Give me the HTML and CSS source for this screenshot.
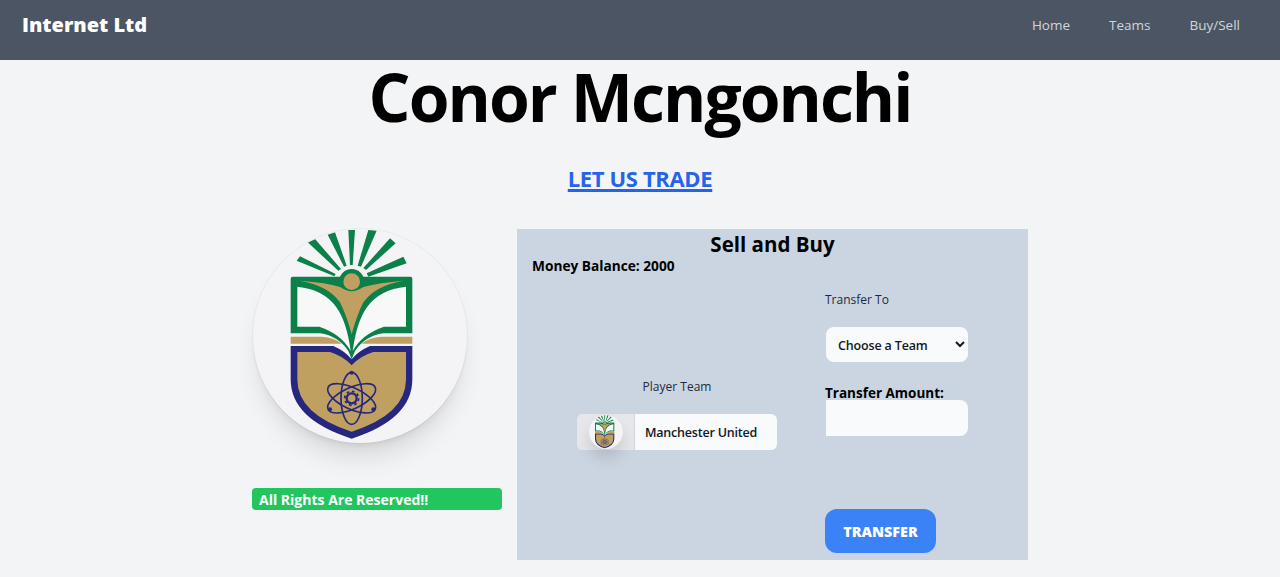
FILE: index.html
```html
<!DOCTYPE html>
<html lang="en">
<head>
    <meta charset="UTF-8">
    <meta name="viewport" content="width=device-width, initial-scale=1.0">
    <title>Internet Ltd</title>
    <link rel="stylesheet" href="styles.css">
</head>
<body>
    <svg class="sprite" aria-hidden="true">
        <symbol id="crest" viewBox="39 29 642 642">
            <circle cx="360" cy="350" r="321" fill="#f4f4f6"/>
            <g fill="#0b8049">
                <polygon points="170,124 180,111 287,164 283,171"/>
                <polygon points="203,69 225,59 303,149 295,154"/>
                <polygon points="263,46 285,39 320,139 312,142"/>
                <polygon points="325,32 345,32 338,137 330,137"/>
                <polygon points="385,32 410,34 363,142 353,139"/>
                <polygon points="450,57 467,72 378,152 370,146"/>
                <polygon points="490,112 500,132 385,172 380,162"/>
                <path d="M152 178 Q152 172 158 172 H512 Q517 172 517 178 V342 H430 Q375 350 345 395 L335 420 L325 395 Q295 350 240 342 H152 Z"/>
                <circle cx="335" cy="187" r="38"/>
            </g>
            <path d="M172 202 Q250 210 288 262 Q320 305 332 395 Q305 345 238 322 H172 Z" fill="#f8f8f8"/>
            <path d="M498 202 Q420 210 382 262 Q350 305 338 395 Q365 345 432 322 H498 Z" fill="#f8f8f8"/>
            <circle cx="335" cy="187" r="25" fill="#c0a060"/>
            <path d="M180 184 Q260 190 300 203 Q335 228 370 203 Q420 190 490 184 Q405 199 370 249 Q350 289 335 345 Q320 289 300 249 Q265 199 180 184 Z" fill="#c0a060"/>
            <path d="M152 352 H245 Q285 355 305 373 H152 Z M517 352 H425 Q385 355 365 373 H517 Z" fill="#c0a060"/>
            <path d="M152 380 H280 Q315 395 335 420 Q355 395 390 380 H517 V480 Q517 600 335 658 Q152 600 152 480 Z" fill="#27277f"/>
            <path d="M172 398 H270 Q310 410 335 438 Q360 410 400 398 H498 V480 Q498 585 335 637 Q172 585 172 480 Z" fill="#c0a060"/>
            <g fill="none" stroke="#27277f" stroke-width="5">
                <ellipse cx="335" cy="537" rx="32" ry="78"/>
                <ellipse cx="335" cy="537" rx="32" ry="78" transform="rotate(65 335 537)"/>
                <ellipse cx="335" cy="537" rx="32" ry="78" transform="rotate(-65 335 537)"/>
                <circle cx="335" cy="537" r="15" stroke-width="7"/>
                <circle cx="335" cy="537" r="21" stroke-width="5" stroke-dasharray="8 8.5"/>
            </g>
            <g fill="#27277f">
                <circle cx="335" cy="460" r="6"/>
                <circle cx="270" cy="570" r="6"/>
                <circle cx="400" cy="570" r="6"/>
            </g>
        </symbol>
    </svg>

    <header class="topbar">
        <a href="#" class="brand">Internet Ltd</a>
        <nav class="nav">
            <a href="#">Home</a>
            <a href="#">Teams</a>
            <a href="#">Buy/Sell</a>
        </nav>
    </header>

    <h1 class="player-name">Conor Mcngonchi</h1>
    <div class="trade-row"><a href="#" class="trade-link">LET US TRADE</a></div>

    <main class="trade">
        <div class="profile">
            <svg class="avatar"><use href="#crest"/></svg>
            <div class="rights">All Rights Are Reserved!!</div>
        </div>

        <form class="panel">
            <h2>Sell and Buy</h2>
            <p class="balance">Money Balance: 2000</p>
            <div class="panel-cols">
                <div class="team-col">
                    <label class="small-label">Player Team</label>
                    <div class="team-box">
                        <span class="team-logo"><svg class="mini-avatar"><use href="#crest"/></svg></span>
                        <span class="team-name">Manchester United</span>
                    </div>
                </div>
                <div class="transfer-col">
                    <label class="small-label" for="team">Transfer To</label>
                    <select id="team" class="field team-select">
                        <option>Choose a Team</option>
                    </select>
                    <label class="amount-label" for="amount">Transfer Amount:</label>
                    <input id="amount" class="field amount-input" type="text">
                    <button type="button" class="transfer-btn">TRANSFER</button>
                </div>
            </div>
        </form>
    </main>
</body>
</html>
```

FILE: styles.css
```css
* {
    box-sizing: border-box;
}

body {
    margin: 0;
    font-family: "Open Sans", "Noto Sans", sans-serif;
    background-color: #f3f4f6;
    color: #000;
}

.sprite {
    display: none;
}

.topbar {
    height: 60px;
    background-color: #4b5563;
    display: flex;
    justify-content: space-between;
    align-items: center;
    padding: 0 20px 10px 22px;
}

.brand {
    color: #fff;
    font-size: 20px;
    font-weight: 800;
    line-height: 28px;
    text-decoration: none;
}

.nav {
    display: flex;
    gap: 39px;
    padding: 0 20px 0 0;
}

.nav a {
    color: #d1d5db;
    font-size: 13.5px;
    text-decoration: none;
}

.player-name {
    margin: 0;
    height: 76px;
    line-height: 73px;
    font-size: 66px;
    font-weight: 700;
    letter-spacing: -2px;
    text-align: center;
}

.trade-row {
    text-align: center;
    padding-top: 27px;
    height: 93px;
}

.trade-link {
    color: #2563eb;
    font-size: 22px;
    font-weight: 700;
    letter-spacing: -0.35px;
    line-height: 30px;
    text-decoration: underline;
    text-decoration-thickness: 3px;
}

.trade {
    display: flex;
    justify-content: center;
    gap: 15px;
}

.profile {
    width: 250px;
}

.avatar {
    display: block;
    width: 214px;
    height: 214px;
    margin-left: 1px;
    border-radius: 50%;
    box-shadow: 0 20px 25px -5px rgba(0, 0, 0, 0.1), 0 8px 10px -6px rgba(0, 0, 0, 0.1), 0 0 2px rgba(0, 0, 0, 0.12);
}

.rights {
    margin-top: 45px;
    height: 22px;
    padding-left: 7px;
    border-radius: 4px;
    background-color: #22c55e;
    color: #fff;
    font-size: 14px;
    font-weight: 700;
    line-height: 24px;
}

.panel {
    width: 511px;
    height: 331px;
    padding: 0 15px;
    background-color: #cbd5e1;
}

.panel h2 {
    margin: 0;
    font-size: 20.5px;
    font-weight: 700;
    line-height: 30px;
    text-align: center;
}

.balance {
    margin: 0;
    font-size: 13.7px;
    font-weight: 700;
    line-height: 14px;
}

.panel-cols {
    display: flex;
}

.team-col {
    width: 290px;
    padding-top: 106px;
    display: flex;
    flex-direction: column;
    align-items: center;
}

.small-label {
    font-size: 12px;
    line-height: 16px;
    color: #1f2937;
}

.team-box {
    display: flex;
    width: 200px;
    height: 36px;
    margin-top: 19px;
    border-radius: 6px;
    background-color: #f9fafb;
}

.team-logo {
    width: 58px;
    padding-left: 12px;
    display: flex;
    align-items: center;
    background-color: #e5e7eb;
    border-right: 1px solid #d1d5db;
    border-radius: 6px 0 0 6px;
}

.mini-avatar {
    display: block;
    width: 34px;
    height: 34px;
    border-radius: 50%;
    box-shadow: 0 10px 15px rgba(0, 0, 0, 0.12);
}

.team-name {
    padding: 1px 0 0 10px;
    font-size: 12.5px;
    font-weight: 600;
    letter-spacing: -0.2px;
    line-height: 36px;
    color: #111827;
}

.transfer-col {
    width: 150px;
    margin-left: 3px;
    padding-top: 19px;
    display: flex;
    flex-direction: column;
    align-items: flex-start;
}

.field {
    width: 142px;
    margin-left: 1px;
    border: none;
    border-radius: 8px;
    background-color: #f9fafb;
    font-family: inherit;
}

.team-select {
    height: 35px;
    margin-top: 19px;
    padding: 1px 0 0 8px;
    font-size: 12.5px;
    font-weight: 600;
    letter-spacing: -0.15px;
    color: #111827;
}

.amount-label {
    margin-top: 24px;
    font-size: 13.5px;
    font-weight: 700;
    line-height: 14px;
}

.amount-input {
    height: 36px;
    border-radius: 0 8px 8px 0;
}

.transfer-btn {
    width: 111px;
    height: 44px;
    margin-top: 73px;
    border: none;
    border-radius: 12px;
    background-color: #3b82f6;
    color: #fff;
    font-family: inherit;
    font-size: 14.4px;
    font-weight: 800;
}
```
